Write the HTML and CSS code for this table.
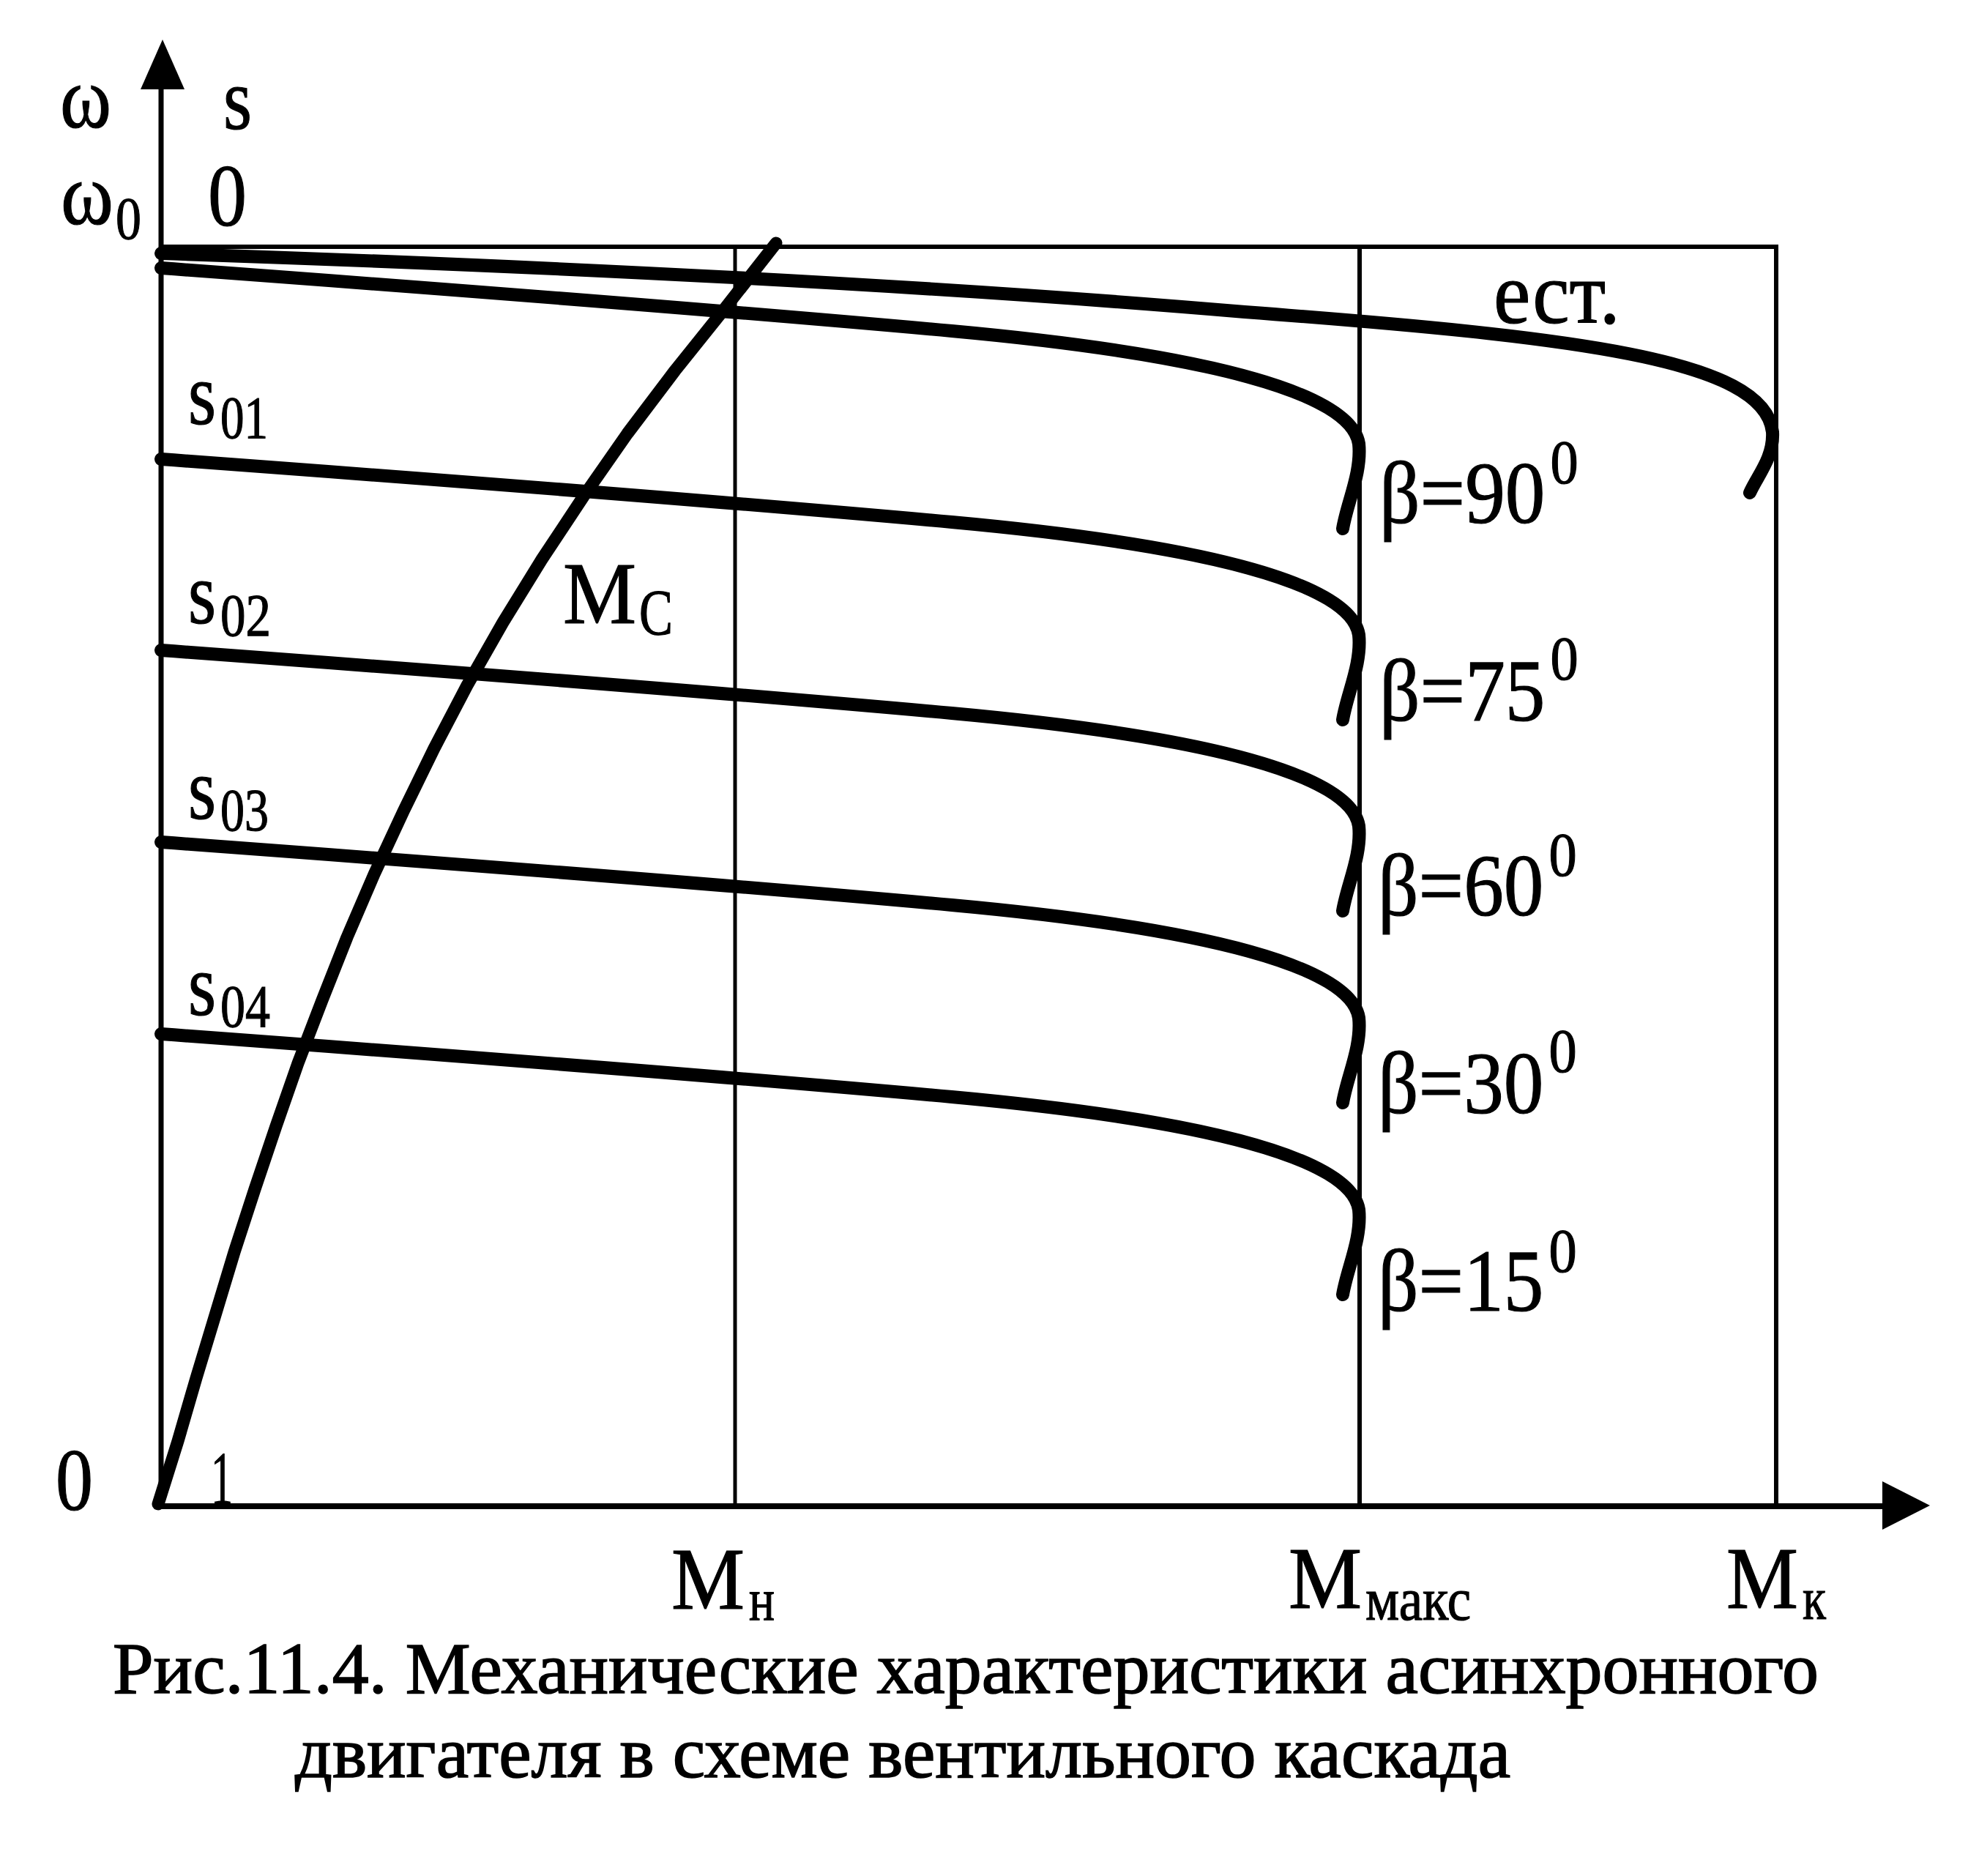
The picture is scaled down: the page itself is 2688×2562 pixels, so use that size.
FILE: index.html
```html
<!DOCTYPE html>
<html lang="ru">
<head>
<meta charset="utf-8">
<title>Рис.11.4</title>
<link rel="stylesheet" href="styles.css">
</head>
<body>
<figure class="figure">
  <svg class="chart" width="2688" height="2221" viewBox="0 0 2688 2221" xmlns="http://www.w3.org/2000/svg">
    <!-- axes -->
    <line class="axis" x1="220" y1="115" x2="220" y2="2058"/>
    <polygon class="ink" points="222,54 252,122 192,122"/>
    <line class="axis-x" x1="214" y1="2057" x2="2580" y2="2057"/>
    <polygon class="ink" points="2636,2056 2571,2023 2571,2089"/>

    <!-- grid frame -->
    <line class="frame" x1="220" y1="337" x2="2429" y2="337"/>
    <line class="grid" x1="1004" y1="337" x2="1004" y2="2057"/>
    <line class="frame" x1="1857" y1="337" x2="1857" y2="2057"/>
    <line class="frame" x1="2426" y1="334" x2="2426" y2="2057"/>

    <!-- natural characteristic -->
    <path class="curve" d="M220,346 Q1100,375 1700,426 C2150,460 2410,490 2421,590 C2423,625 2400,650 2390,673"/>

    <!-- cascade characteristics -->
    <path class="curve" d="M220,366 Q900,416 1300,452 C1650,484 1845,536 1856,606 C1860,646 1840,686 1834,722"/>
    <path class="curve" d="M220,627 Q900,677 1300,713 C1650,745 1845,797 1856,867 C1860,907 1840,947 1834,983"/>
    <path class="curve" d="M220,888 Q900,938 1300,974 C1650,1006 1845,1058 1856,1128 C1860,1168 1840,1208 1834,1244"/>
    <path class="curve" d="M220,1150 Q900,1200 1300,1236 C1650,1268 1845,1320 1856,1390 C1860,1430 1840,1470 1834,1506"/>
    <path class="curve" d="M220,1412 Q900,1462 1300,1498 C1650,1530 1845,1582 1856,1652 C1860,1692 1840,1732 1834,1768"/>

    <!-- load characteristic Mc -->
    <polyline class="curve mc" points="216,2054 243,1968 268,1882 294,1796 320,1710 348,1624 377,1538 407,1452 440,1366 474,1280 511,1194 551,1108 593,1022 638,936 687,850 740,764 797,678 857,592 922,506 991,420 1060,332"/>

    <!-- axis labels -->
    <text class="lbl big"><tspan x="82" y="174" textLength="70" lengthAdjust="spacingAndGlyphs">ω</tspan></text>
    <text class="lbl big"><tspan x="305" y="176" textLength="39" lengthAdjust="spacingAndGlyphs">s</tspan></text>
    <text class="lbl big"><tspan x="83" y="306" textLength="72" lengthAdjust="spacingAndGlyphs">ω</tspan><tspan class="sub" x="158" y="326" textLength="35" lengthAdjust="spacingAndGlyphs">0</tspan></text>
    <text class="lbl big"><tspan x="284" y="308" textLength="53" lengthAdjust="spacingAndGlyphs">0</tspan></text>

    <text class="lbl big"><tspan x="2040" y="441" textLength="173" lengthAdjust="spacingAndGlyphs">ест.</tspan></text>

    <text class="lbl big"><tspan x="257" y="579" textLength="38" lengthAdjust="spacingAndGlyphs">s</tspan><tspan class="sub" x="301" y="598" textLength="65" lengthAdjust="spacingAndGlyphs">01</tspan></text>
    <text class="lbl big"><tspan x="257" y="851" textLength="38" lengthAdjust="spacingAndGlyphs">s</tspan><tspan class="sub" x="301" y="868" textLength="69" lengthAdjust="spacingAndGlyphs">02</tspan></text>
    <text class="lbl big"><tspan x="257" y="1118" textLength="38" lengthAdjust="spacingAndGlyphs">s</tspan><tspan class="sub" x="301" y="1134" textLength="66" lengthAdjust="spacingAndGlyphs">03</tspan></text>
    <text class="lbl big"><tspan x="257" y="1386" textLength="38" lengthAdjust="spacingAndGlyphs">s</tspan><tspan class="sub" x="301" y="1402" textLength="68" lengthAdjust="spacingAndGlyphs">04</tspan></text>

    <text class="lbl big"><tspan x="769" y="851" textLength="100" lengthAdjust="spacingAndGlyphs">M</tspan><tspan class="subc" x="873" y="866" textLength="46" lengthAdjust="spacingAndGlyphs">С</tspan></text>

    <!-- firing-angle labels -->
    <text class="lbl big" transform="translate(1884 714) scale(0.91 1)">β=90<tspan class="sup" dx="8" dy="-54">0</tspan></text>
    <text class="lbl big" transform="translate(1884 984) scale(0.91 1)">β=75<tspan class="sup" dx="8" dy="-56">0</tspan></text>
    <text class="lbl big" transform="translate(1882 1250) scale(0.91 1)">β=60<tspan class="sup" dx="8" dy="-54">0</tspan></text>
    <text class="lbl big" transform="translate(1882 1520) scale(0.91 1)">β=30<tspan class="sup" dx="8" dy="-56">0</tspan></text>
    <text class="lbl big" transform="translate(1882 1790) scale(0.91 1)">β=15<tspan class="sup" dx="8" dy="-53">0</tspan></text>

    <text class="lbl big"><tspan x="76" y="2062" textLength="51" lengthAdjust="spacingAndGlyphs">0</tspan></text>
    <text class="lbl mid"><tspan x="288" y="2054" textLength="30" lengthAdjust="spacingAndGlyphs">1</tspan></text>

    <text class="lbl big"><tspan x="917" y="2197" textLength="100" lengthAdjust="spacingAndGlyphs">M</tspan><tspan class="sub" x="1023" y="2213" textLength="35" lengthAdjust="spacingAndGlyphs">н</tspan></text>
    <text class="lbl big"><tspan x="1760" y="2196" textLength="100" lengthAdjust="spacingAndGlyphs">M</tspan><tspan class="sub" x="1865" y="2212" textLength="144" lengthAdjust="spacingAndGlyphs">макс</tspan></text>
    <text class="lbl big"><tspan x="2358" y="2196" textLength="98" lengthAdjust="spacingAndGlyphs">M</tspan><tspan class="sub" x="2462" y="2211" textLength="32" lengthAdjust="spacingAndGlyphs">к</tspan></text>
  </svg>
  <figcaption class="caption">
    <span class="caption-line first">Рис.11.4. Механические характеристики асинхронного</span>
    <span class="caption-line second">двигателя в схеме вентильного каскада</span>
  </figcaption>
</figure>
</body>
</html>
```

FILE: styles.css
```css
html, body {
  margin: 0;
  padding: 0;
  background: #ffffff;
}

body {
  width: 2688px;
  min-height: 2562px;
  color: #000000;
  font-family: "Liberation Serif", "Times New Roman", serif;
}

.figure {
  margin: 0;
  display: flex;
  flex-direction: column;
}

.chart {
  display: block;
  overflow: visible;
}

.axis {
  stroke: #000;
  stroke-width: 7;
}

.axis-x {
  stroke: #000;
  stroke-width: 8;
}

.ink {
  fill: #000;
}

.frame {
  stroke: #000;
  stroke-width: 6;
}

.grid {
  stroke: #000;
  stroke-width: 5;
}

.curve {
  fill: none;
  stroke: #000;
  stroke-width: 18;
  stroke-linecap: round;
  stroke-linejoin: round;
}

.mc {
  stroke-width: 17;
}

.lbl {
  font-family: "Liberation Serif", "Times New Roman", serif;
  fill: #000;
  stroke: #000;
  stroke-width: 1.2px;
}

.big {
  font-size: 120px;
}

.mid {
  font-size: 104px;
}

.sub {
  font-size: 82px;
}

.sup {
  font-size: 84px;
}

.subc {
  font-size: 88px;
}

.caption {
  display: flex;
  flex-direction: column;
  font-size: 100px;
  line-height: 115px;
  white-space: nowrap;
  -webkit-text-stroke: 1.6px #000;
}

.caption-line.first {
  padding-left: 154px;
}

.caption-line.second {
  padding-left: 403px;
}
```
